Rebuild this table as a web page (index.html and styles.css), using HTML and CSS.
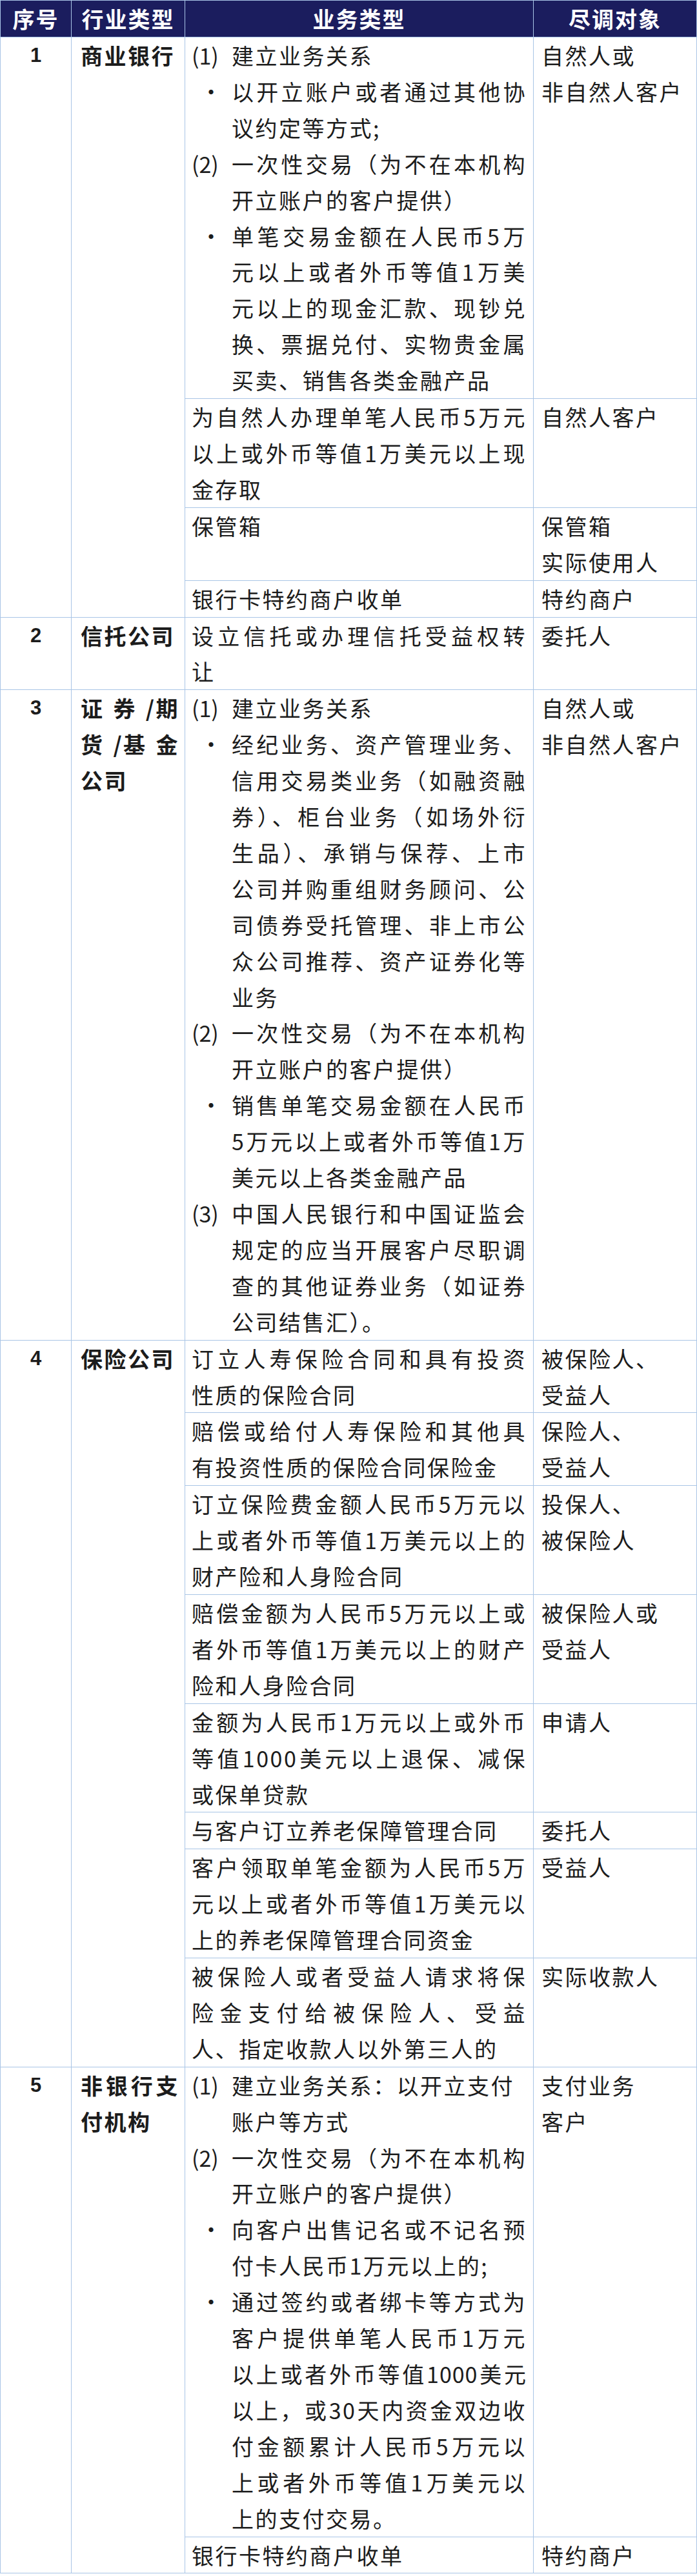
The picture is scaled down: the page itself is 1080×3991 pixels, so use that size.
FILE: index.html
```html
<!DOCTYPE html>
<html lang="zh-CN">
<head>
<meta charset="utf-8">
<title>尽调对象</title>
<link rel="stylesheet" href="styles.css">
</head>
<body>
<table class="kyc">
  <colgroup>
    <col class="c-no"><col class="c-ind"><col class="c-biz"><col class="c-obj">
  </colgroup>
  <thead>
    <tr><th>序号</th><th>行业类型</th><th>业务类型</th><th>尽调对象</th></tr>
  </thead>
  <tbody>
    <!-- 1 商业银行 -->
    <tr>
      <td class="no" rowspan="4">1</td>
      <td class="ind" rowspan="4"><div class="ln end">商业银行</div></td>
      <td class="biz">
        <div class="item"><span class="mk">(1)</span><div class="tx"><div class="ln end">建立业务关系</div></div></div>
        <div class="item"><span class="mk dot">·</span><div class="tx"><div class="ln">以开立账户或者通过其他协</div><div class="ln end">议约定等方式;</div></div></div>
        <div class="item"><span class="mk">(2)</span><div class="tx"><div class="ln">一次性交易（为不在本机构</div><div class="ln end">开立账户的客户提供）</div></div></div>
        <div class="item"><span class="mk dot">·</span><div class="tx"><div class="ln">单笔交易金额在人民币5万</div><div class="ln">元以上或者外币等值1万美</div><div class="ln">元以上的现金汇款、现钞兑</div><div class="ln">换、票据兑付、实物贵金属</div><div class="ln end">买卖、销售各类金融产品</div></div></div>
      </td>
      <td class="obj"><div class="ln end">自然人或</div><div class="ln end">非自然人客户</div></td>
    </tr>
    <tr>
      <td class="biz"><div class="ln">为自然人办理单笔人民币5万元</div><div class="ln">以上或外币等值1万美元以上现</div><div class="ln end">金存取</div></td>
      <td class="obj"><div class="ln end">自然人客户</div></td>
    </tr>
    <tr>
      <td class="biz"><div class="ln end">保管箱</div></td>
      <td class="obj"><div class="ln end">保管箱</div><div class="ln end">实际使用人</div></td>
    </tr>
    <tr>
      <td class="biz"><div class="ln end">银行卡特约商户收单</div></td>
      <td class="obj"><div class="ln end">特约商户</div></td>
    </tr>

    <!-- 2 信托公司 -->
    <tr>
      <td class="no">2</td>
      <td class="ind"><div class="ln end">信托公司</div></td>
      <td class="biz"><div class="ln">设立信托或办理信托受益权转</div><div class="ln end">让</div></td>
      <td class="obj"><div class="ln end">委托人</div></td>
    </tr>

    <!-- 3 证券/期货/基金公司 -->
    <tr>
      <td class="no">3</td>
      <td class="ind">
        <div class="spread"><span>证</span><span>券</span><span>/期</span></div>
        <div class="spread"><span>货</span><span>/基</span><span>金</span></div>
        <div class="ln end">公司</div>
      </td>
      <td class="biz">
        <div class="item"><span class="mk">(1)</span><div class="tx"><div class="ln end">建立业务关系</div></div></div>
        <div class="item"><span class="mk dot">·</span><div class="tx"><div class="ln">经纪业务、资产管理业务、</div><div class="ln">信用交易类业务（如融资融</div><div class="ln">券）、柜台业务（如场外衍</div><div class="ln">生品）、承销与保荐、上市</div><div class="ln">公司并购重组财务顾问、公</div><div class="ln">司债券受托管理、非上市公</div><div class="ln">众公司推荐、资产证券化等</div><div class="ln end">业务</div></div></div>
        <div class="item"><span class="mk">(2)</span><div class="tx"><div class="ln">一次性交易（为不在本机构</div><div class="ln end">开立账户的客户提供）</div></div></div>
        <div class="item"><span class="mk dot">·</span><div class="tx"><div class="ln">销售单笔交易金额在人民币</div><div class="ln">5万元以上或者外币等值1万</div><div class="ln end">美元以上各类金融产品</div></div></div>
        <div class="item"><span class="mk">(3)</span><div class="tx"><div class="ln">中国人民银行和中国证监会</div><div class="ln">规定的应当开展客户尽职调</div><div class="ln">查的其他证券业务（如证券</div><div class="ln end">公司结售汇）。</div></div></div>
      </td>
      <td class="obj"><div class="ln end">自然人或</div><div class="ln end">非自然人客户</div></td>
    </tr>

    <!-- 4 保险公司 -->
    <tr>
      <td class="no" rowspan="8">4</td>
      <td class="ind" rowspan="8"><div class="ln end">保险公司</div></td>
      <td class="biz"><div class="ln">订立人寿保险合同和具有投资</div><div class="ln end">性质的保险合同</div></td>
      <td class="obj"><div class="ln end">被保险人、</div><div class="ln end">受益人</div></td>
    </tr>
    <tr>
      <td class="biz"><div class="ln">赔偿或给付人寿保险和其他具</div><div class="ln end">有投资性质的保险合同保险金</div></td>
      <td class="obj"><div class="ln end">保险人、</div><div class="ln end">受益人</div></td>
    </tr>
    <tr>
      <td class="biz"><div class="ln">订立保险费金额人民币5万元以</div><div class="ln">上或者外币等值1万美元以上的</div><div class="ln end">财产险和人身险合同</div></td>
      <td class="obj"><div class="ln end">投保人、</div><div class="ln end">被保险人</div></td>
    </tr>
    <tr>
      <td class="biz"><div class="ln">赔偿金额为人民币5万元以上或</div><div class="ln">者外币等值1万美元以上的财产</div><div class="ln end">险和人身险合同</div></td>
      <td class="obj"><div class="ln end">被保险人或</div><div class="ln end">受益人</div></td>
    </tr>
    <tr>
      <td class="biz"><div class="ln">金额为人民币1万元以上或外币</div><div class="ln">等值1000美元以上退保、减保</div><div class="ln end">或保单贷款</div></td>
      <td class="obj"><div class="ln end">申请人</div></td>
    </tr>
    <tr>
      <td class="biz"><div class="ln end">与客户订立养老保障管理合同</div></td>
      <td class="obj"><div class="ln end">委托人</div></td>
    </tr>
    <tr>
      <td class="biz"><div class="ln">客户领取单笔金额为人民币5万</div><div class="ln">元以上或者外币等值1万美元以</div><div class="ln end">上的养老保障管理合同资金</div></td>
      <td class="obj"><div class="ln end">受益人</div></td>
    </tr>
    <tr>
      <td class="biz"><div class="ln">被保险人或者受益人请求将保</div><div class="ln">险金支付给被保险人、受益</div><div class="ln end">人、指定收款人以外第三人的</div></td>
      <td class="obj"><div class="ln end">实际收款人</div></td>
    </tr>

    <!-- 5 非银行支付机构 -->
    <tr>
      <td class="no" rowspan="2">5</td>
      <td class="ind" rowspan="2"><div class="ln">非银行支</div><div class="ln end">付机构</div></td>
      <td class="biz">
        <div class="item"><span class="mk">(1)</span><div class="tx"><div class="ln end">建立业务关系：以开立支付</div><div class="ln end">账户等方式</div></div></div>
        <div class="item"><span class="mk">(2)</span><div class="tx"><div class="ln">一次性交易（为不在本机构</div><div class="ln end">开立账户的客户提供）</div></div></div>
        <div class="item"><span class="mk dot">·</span><div class="tx"><div class="ln">向客户出售记名或不记名预</div><div class="ln end">付卡人民币1万元以上的;</div></div></div>
        <div class="item"><span class="mk dot">·</span><div class="tx"><div class="ln">通过签约或者绑卡等方式为</div><div class="ln">客户提供单笔人民币1万元</div><div class="ln tight">以上或者外币等值1000美元</div><div class="ln">以上，或30天内资金双边收</div><div class="ln">付金额累计人民币5万元以</div><div class="ln">上或者外币等值1万美元以</div><div class="ln end">上的支付交易。</div></div></div>
      </td>
      <td class="obj"><div class="ln end">支付业务</div><div class="ln end">客户</div></td>
    </tr>
    <tr>
      <td class="biz"><div class="ln end">银行卡特约商户收单</div></td>
      <td class="obj"><div class="ln end">特约商户</div></td>
    </tr>
  </tbody>
</table>
</body>
</html>
```

FILE: styles.css
```css
html, body {
  margin: 0;
  padding: 0;
  background: #ffffff;
}

.kyc {
  border-collapse: collapse;
  table-layout: fixed;
  width: 1079px;
  font-family: "Noto Sans CJK SC", "Noto Sans", sans-serif;
  font-size: 34px;
  letter-spacing: 2.5px;
  color: #1c1c1c;
}

.c-no { width: 110px; }
.c-ind { width: 176px; }
.c-biz { width: 540px; }
.c-obj { width: 253px; }

.kyc th,
.kyc td {
  border: 1px solid #a9c5e6;
  padding: 0;
  vertical-align: top;
  line-height: 55.9px;
}

.kyc th {
  background: #1b1d5e;
  color: #ffffff;
  font-weight: 700;
  text-align: center;
  height: 56px;
  line-height: 56px;
  letter-spacing: 2px;
}

.kyc td.no {
  text-align: center;
  font-family: "Liberation Sans", "Noto Sans", sans-serif;
  font-weight: 700;
  font-size: 31px;
  letter-spacing: 0;
}

.kyc td.ind {
  padding: 0 8px 0 14px;
  font-weight: 700;
}

.kyc td.biz {
  padding: 0 10px 0 10px;
}

.kyc td.obj {
  padding: 0 8px 0 12px;
}

.item {
  display: flex;
}

.mk {
  flex: none;
  width: 62px;
  letter-spacing: 0;
}

.mk.dot {
  box-sizing: border-box;
  padding-left: 13px;
}

.tx {
  flex: 1;
  min-width: 0;
}

.ln {
  text-align: justify;
  text-align-last: justify;
}

.ln.end {
  text-align-last: left;
}

.ln.tight {
  letter-spacing: 1px;
}

.spread {
  display: flex;
  justify-content: space-between;
}
```
